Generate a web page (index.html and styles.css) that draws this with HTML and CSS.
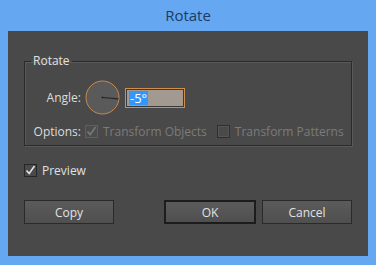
FILE: index.html
```html
<!DOCTYPE html>
<html lang="en">
<head>
    <meta charset="UTF-8">
    <title>Rotate</title>
    <link rel="stylesheet" href="styles.css">
</head>
<body>
    <div class="window">
        <div class="title-bar">Rotate</div>
        <div class="dialog">
            <fieldset class="group">
                <legend class="group-label">Rotate</legend>
                <div class="form-grid">
                    <span class="field-label">Angle:</span>
                    <div class="angle-controls">
                        <svg class="dial" width="35" height="35" viewBox="0 0 35 35">
                            <circle cx="17.5" cy="17.5" r="16.5" fill="#5a5a5a" stroke="#c98a4c" stroke-width="1"/>
                            <line x1="17.5" y1="17.5" x2="33.5" y2="18.9" stroke="#262626" stroke-width="1.2"/>
                            <circle cx="17.5" cy="17.5" r="1" fill="#262626"/>
                        </svg>
                        <div class="angle-input"><span class="selected">-5°</span></div>
                    </div>
                    <span class="field-label">Options:</span>
                    <div class="options">
                        <label class="check disabled">
                            <svg class="box" width="13" height="13" viewBox="0 0 13 13">
                                <rect x="0.5" y="0.5" width="12" height="12" fill="#4c4c4c" stroke="#5f5f5f"/>
                                <path d="M2.5 6.5 L5.2 9.5 L10.5 2" fill="none" stroke="#767676" stroke-width="1.8"/>
                            </svg>
                            Transform Objects
                        </label>
                        <label class="check disabled">
                            <svg class="box" width="13" height="13" viewBox="0 0 13 13">
                                <rect x="0.5" y="0.5" width="12" height="12" fill="#4a4a4a" stroke="#2f2f2f"/>
                                <rect x="1.5" y="1.5" width="10" height="10" fill="none" stroke="#555"/>
                            </svg>
                            Transform Patterns
                        </label>
                    </div>
                </div>
            </fieldset>

            <label class="check preview">
                <svg class="box" width="13" height="13" viewBox="0 0 13 13">
                    <rect x="0.5" y="0.5" width="12" height="12" fill="#4a4a4a" stroke="#262626"/>
                    <path d="M2.5 6.5 L5.2 9.5 L10.5 2" fill="none" stroke="#e4e4e4" stroke-width="1.6"/>
                </svg>
                Preview
            </label>

            <div class="buttons">
                <button class="btn">Copy</button>
                <button class="btn btn-default">OK</button>
                <button class="btn">Cancel</button>
            </div>
        </div>
    </div>
</body>
</html>
```

FILE: styles.css
```css
body {
    margin: 0;
    background-color: #63a4ee;
    font-family: 'Open Sans', sans-serif;
}
.window {
    width: 376px;
    height: 265px;
    background-color: #65a7f0;
    box-sizing: border-box;
}
.title-bar {
    height: 31px;
    line-height: 31px;
    text-align: center;
    font-size: 15px;
    color: #1b3b68;
}
.dialog {
    margin: 0 8px;
    height: 225px;
    background-color: #494949;
    padding: 23px 16px 0 16px;
    box-sizing: border-box;
    color: #dcdcdc;
    font-size: 12px;
}
.group {
    margin: 0;
    padding: 12px 0 10px 0;
    border: 1px solid #2a2a2a;
    box-shadow: 1px 1px 0 #5a5a5a, inset 1px 1px 0 #5a5a5a;
    height: 92px;
    box-sizing: border-box;
    min-width: 0;
}
.group-label {
    padding: 0 2px;
    margin-left: 6px;
    color: #e2e2e2;
    line-height: 14px;
}
.form-grid {
    display: grid;
    grid-template-columns: 56px 1fr;
    column-gap: 4px;
    row-gap: 8px;
    align-items: center;
}
.field-label {
    text-align: right;
}
.angle-controls {
    display: flex;
    align-items: center;
    gap: 5px;
}
.dial {
    display: block;
}
.angle-input {
    width: 60px;
    height: 20px;
    box-sizing: border-box;
    border: 1px solid #d18d4c;
    box-shadow: inset 0 0 0 1px #3a3a3a;
    background-color: #a29a91;
    padding: 2px 0 0 3px;
    line-height: 14px;
}
.selected {
    display: inline-block;
    background-color: #3396fa;
    color: #ffffff;
    padding: 0 1px;
    font-size: 13px;
}
.options {
    display: flex;
    gap: 10px;
}
.check {
    display: flex;
    align-items: center;
    gap: 5px;
}
.box {
    display: block;
}
.disabled {
    color: #7b7b7b;
}
.preview {
    margin-top: 16px;
    color: #e0e0e0;
}
.buttons {
    display: flex;
    gap: 6px;
    margin-top: 21px;
}
.btn {
    width: 90px;
    height: 24px;
    border: 1px solid #2a2a2a;
    background: linear-gradient(#5b5b5b, #4f4f4f);
    color: #e2e2e2;
    font-family: 'Open Sans', sans-serif;
    font-size: 12px;
    padding: 0;
}
.btn-default {
    width: 92px;
    margin-left: auto;
    border: 2px solid #1c1c1c;
}
```
